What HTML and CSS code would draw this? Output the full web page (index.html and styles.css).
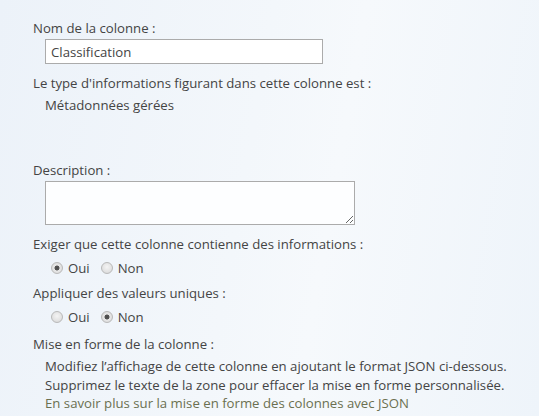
FILE: index.html
```html
<!DOCTYPE html>
<html lang="fr">
<head>
<meta charset="utf-8">
<title>Colonne</title>
<link rel="stylesheet" href="styles.css">
</head>
<body>
<form class="panel">
  <div class="label first">Nom de la colonne :</div>
  <div class="indent"><input class="text-input" type="text" value="Classification"></div>

  <div class="label after-input">Le type d'informations figurant dans cette colonne est :</div>
  <div class="indent value">Métadonnées gérées</div>

  <div class="label desc">Description :</div>
  <div class="indent"><textarea class="text-area"></textarea></div>

  <div class="label after-area">Exiger que cette colonne contienne des informations :</div>
  <div class="indent radios">
    <label class="opt"><input class="radio" type="radio" name="req" checked><span>Oui</span></label>
    <label class="opt"><input class="radio" type="radio" name="req"><span>Non</span></label>
  </div>

  <div class="label after-radio">Appliquer des valeurs uniques :</div>
  <div class="indent radios">
    <label class="opt"><input class="radio" type="radio" name="uniq"><span>Oui</span></label>
    <label class="opt"><input class="radio" type="radio" name="uniq" checked><span>Non</span></label>
  </div>

  <div class="label after-radio last">Mise en forme de la colonne :</div>
  <div class="indent para">
    <div>Modifiez l’affichage de cette colonne en ajoutant le format JSON ci-dessous.</div>
    <div>Supprimez le texte de la zone pour effacer la mise en forme personnalisée.</div>
    <a class="link" href="#">En savoir plus sur la mise en forme des colonnes avec JSON</a>
  </div>
</form>
</body>
</html>
```

FILE: styles.css
```css
html, body {
  margin: 0;
  height: 100%;
}

body {
  background: linear-gradient(100deg, #ecf2f9 0%, #f3f7fb 45%, #f6f9fc 60%, #eef4fa 100%);
  font-family: "Open Sans", "Noto Sans", sans-serif;
  font-size: 13.2px;
  line-height: 18px;
  color: #444444;
  overflow: hidden;
}

.panel {
  display: flex;
  flex-direction: column;
  padding: 19px 0 0 33px;
}

.label.first { margin-top: 0; }
.label.after-input { margin-top: 10px; }
.label.desc { margin-top: 47px; }
.label.after-area { margin-top: 10px; }
.label.after-radio { margin-top: 7px; }
.label.after-radio.last { margin-top: 9px; }

.indent {
  padding-left: 12px;
}

.value { margin-top: 4px; }

.text-input {
  display: block;
  box-sizing: border-box;
  width: 278px;
  height: 25px;
  margin: 2px 0 0;
  padding: 0 5px;
  border: 1px solid #ababab;
  background: #ffffff;
  font: inherit;
  color: #444444;
  outline: none;
}

.text-area {
  display: block;
  box-sizing: border-box;
  width: 310px;
  height: 44px;
  margin: 2px 0 0;
  padding: 2px 4px;
  border: 1px solid #ababab;
  background: #fdfeff;
  font: inherit;
  resize: both;
  outline: none;
}

.radios {
  display: flex;
  align-items: center;
  margin-top: 6px;
  padding-left: 18px;
  gap: 11px;
}

.opt {
  display: flex;
  align-items: center;
  gap: 5px;
}

.radio {
  appearance: none;
  -webkit-appearance: none;
  box-sizing: border-box;
  width: 12px;
  height: 12px;
  margin: 0;
  border: 1px solid #b9b9b9;
  border-radius: 50%;
  background: radial-gradient(circle at 50% 40%, #f4f4f4 0%, #e2e2e2 60%, #d4d4d4 100%);
}

.radio:checked {
  background: radial-gradient(circle, #4a4a4a 0, #555555 2.2px, #e8e8e8 2.8px, #e2e2e2 60%, #d2d2d2 100%);
}

.para {
  margin-top: 4px;
  display: flex;
  flex-direction: column;
  line-height: 18.5px;
}

.link {
  color: #6b7050;
  text-decoration: none;
}
```
